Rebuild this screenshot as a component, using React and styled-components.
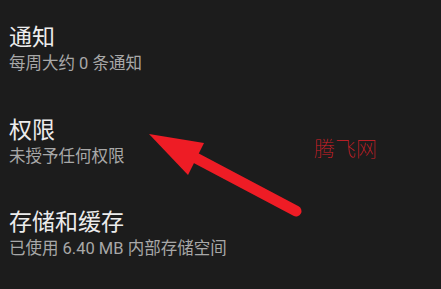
import React from "react";
import styled, { createGlobalStyle } from "styled-components";

const GlobalStyle = createGlobalStyle`
  html, body {
    margin: 0;
    padding: 0;
    background: #1c1c1c;
  }
`;

const Page = styled.div`
  position: relative;
  width: 441px;
  height: 289px;
  overflow: hidden;
  background: #1c1c1c;
  padding-top: 4px;
  box-sizing: border-box;
  font-family: Roboto, "Noto Sans CJK SC", sans-serif;
`;

const List = styled.ul`
  list-style: none;
  margin: 0;
  padding: 0;
`;

const Row = styled.li`
  height: 92.5px;
  padding: 20px 9px 0;
  box-sizing: border-box;
`;

const Title = styled.div`
  font-size: 23px;
  line-height: 28px;
  color: #ececec;
`;

const Summary = styled.div`
  font-size: 16.5px;
  line-height: 24px;
  color: #a8a8a8;
`;

const Watermark = styled.span`
  position: absolute;
  left: 314px;
  top: 134px;
  font-family: "Noto Sans CJK SC", sans-serif;
  font-size: 21px;
  line-height: 26px;
  font-weight: 100;
  color: #d42029;
`;

const Arrow = styled.svg`
  position: absolute;
  left: 0;
  top: 0;
  pointer-events: none;
`;

const items = [
  { title: "通知", summary: "每周大约 0 条通知" },
  { title: "权限", summary: "未授予任何权限" },
  { title: "存储和缓存", summary: "已使用 6.40 MB 内部存储空间" },
];

export default function App() {
  return (
    <Page>
      <GlobalStyle />
      <List>
        {items.map((item) => (
          <Row key={item.title}>
            <Title>{item.title}</Title>
            <Summary>{item.summary}</Summary>
          </Row>
        ))}
      </List>
      <Watermark>腾飞网</Watermark>
      <Arrow width="441" height="289" viewBox="0 0 441 289">
        <line
          x1="192"
          y1="156"
          x2="296"
          y2="211"
          stroke="#ee1c25"
          strokeWidth="11"
          strokeLinecap="round"
        />
        <polygon points="149,134 204,143 188,175" fill="#ee1c25" />
      </Arrow>
    </Page>
  );
}
